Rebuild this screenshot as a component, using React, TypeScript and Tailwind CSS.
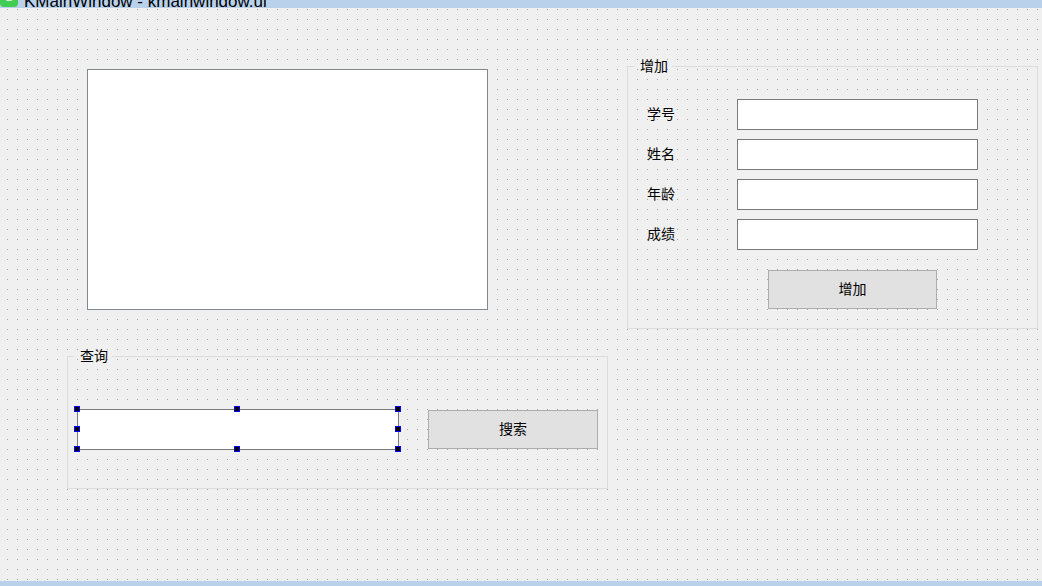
import React from 'react';

const cjk = "font-['Noto_Sans_CJK_SC','Noto_Sans',sans-serif]";

function GroupBox({ title, width, bodyHeight, children }: { title: string; width: string; bodyHeight: string; children: React.ReactNode }) {
    return (
        <div className={`flex flex-col ${width}`}>
            {/* title row, frame line broken around the caption */}
            <div className="flex items-start h-[15px]">
                <div className="mt-[7px] h-[8px] w-[8px] border-l border-t border-[#dcdcdc]" />
                <span className={`pl-[5px] pr-[4px] pb-[2px] text-[14px] leading-[13px] text-black ${cjk}`}>{title}</span>
                <div className="mt-[7px] h-[8px] flex-1 border-r border-t border-[#dcdcdc]" />
            </div>
            <div className={`border-x border-b border-[#dcdcdc] ${bodyHeight}`}>{children}</div>
        </div>
    );
}

function Handle({ pos }: { pos: string }) {
    return <div className={`absolute w-[6px] h-[6px] bg-black border border-[#0000ff] ${pos}`} />;
}

export default function App() {
    const fields = ['学号', '姓名', '年龄', '成绩'];

    return (
        <div className="w-[1042px] h-[586px] flex flex-col bg-[#f0f0f0] overflow-hidden">
            {/* Window title bar (mostly scrolled out of view) */}
            <div className="h-[8px] shrink-0 bg-[#b9d1ea] flex items-start overflow-hidden">
                <div className="mt-[-10px] w-[18px] h-[17px] rounded-[4px] bg-[#41cd52] flex items-center justify-center">
                    <span className="text-white text-[10px] font-bold leading-none font-['Liberation_Sans',sans-serif]">&lt;&gt;</span>
                </div>
                <span className="ml-[6px] mt-[-7px] text-[17px] leading-[17px] text-black font-['Liberation_Sans',sans-serif]">
                    KMainWindow - kmainwindow.ui
                </span>
            </div>

            {/* Designer canvas with dot grid */}
            <div className="flex-1 flex items-start bg-[#f0f0f0] bg-[conic-gradient(from_270deg_at_1px_1px,#a0a0a0_90deg,transparent_0)] bg-[length:10px_10px] bg-[position:7px_1px]">
                {/* left column */}
                <div className="ml-[67px] w-[541px] pt-[61px] flex flex-col">
                    <div className="ml-[20px] w-[401px] h-[241px] bg-white border border-[#828790]" />

                    <div className="mt-[39px]">
                        <GroupBox title="查询" width="w-[541px]" bodyHeight="h-[125px]">
                            <div className="pt-[45px] pl-[9px] flex items-center gap-[29px]">
                                <div className="relative w-[322px] h-[41px] bg-white border border-[#7a7a7a]">
                                    <Handle pos="left-[-4px] top-[-4px]" />
                                    <Handle pos="left-[156px] top-[-4px]" />
                                    <Handle pos="left-[317px] top-[-4px]" />
                                    <Handle pos="left-[-4px] top-[16px]" />
                                    <Handle pos="left-[317px] top-[16px]" />
                                    <Handle pos="left-[-4px] top-[36px]" />
                                    <Handle pos="left-[156px] top-[36px]" />
                                    <Handle pos="left-[317px] top-[36px]" />
                                </div>
                                <button className={`w-[170px] h-[39px] pb-[2px] bg-[#e1e1e1] border border-[#adadad] text-[14px] text-black ${cjk}`}>
                                    搜索
                                </button>
                            </div>
                        </GroupBox>
                    </div>
                </div>

                {/* right group */}
                <div className="ml-[19px] mt-[51px]">
                    <GroupBox title="增加" width="w-[411px]" bodyHeight="h-[255px]">
                        <div className="pt-[25px] pl-[19px] flex flex-col gap-[9px]">
                            {fields.map((f) => (
                                <div key={f} className="flex items-center">
                                    <span className={`w-[90px] pb-[3px] text-[14px] text-black ${cjk}`}>{f}</span>
                                    <div className="w-[241px] h-[31px] bg-white border border-[#7a7a7a]" />
                                </div>
                            ))}
                        </div>
                        <button className={`mt-[20px] ml-[140px] w-[169px] h-[39px] pb-[2px] bg-[#e1e1e1] border border-[#adadad] text-[14px] text-black ${cjk}`}>
                            增加
                        </button>
                    </GroupBox>
                </div>
            </div>

            {/* bottom bar */}
            <div className="h-[5px] shrink-0 bg-[#b9d1ea]" />
        </div>
    );
}
